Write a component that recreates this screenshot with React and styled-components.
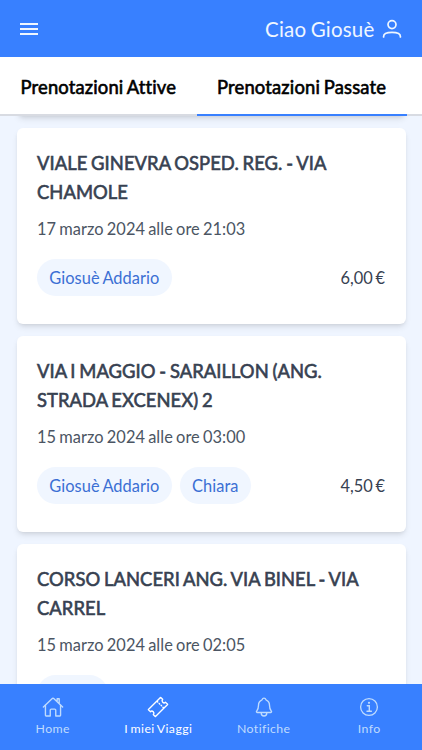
import React from 'react'
import styled, { createGlobalStyle } from 'styled-components';
import { IoHomeOutline, IoTicketOutline, IoNotificationsOutline } from 'react-icons/io5';

const trips = [
    {
        route: 'VIALE GINEVRA OSPED. REG. - VIA CHAMOLE',
        date: '17 marzo 2024 alle ore 21:03',
        people: ['Giosuè Addario'],
        price: '6,00 €'
    },
    {
        route: 'VIA I MAGGIO - SARAILLON (ANG. STRADA EXCENEX) 2',
        date: '15 marzo 2024 alle ore 03:00',
        people: ['Giosuè Addario', 'Chiara'],
        price: '4,50 €'
    },
    {
        route: 'CORSO LANCERI ANG. VIA BINEL - VIA CARREL',
        date: '15 marzo 2024 alle ore 02:05',
        people: ['Chiara']
    }
]

function Trip({ route, date, people, price }) {
    return (
        <Card>
            <Route>{route}</Route>
            <TripDate>{date}</TripDate>
            <CardFooter>
                <People>
                    {people.map((name) => <Chip key={name}>{name}</Chip>)}
                </People>
                {price && <Price>{price}</Price>}
            </CardFooter>
        </Card>
    )
}

function App() {
    return (
        <>
            <GlobalStyle />
            <Screen>
                <Header>
                    <MenuButton aria-label="Menu">
                        <span />
                        <span />
                        <span />
                    </MenuButton>
                    <User>
                        <span>Ciao Giosuè</span>
                        <PersonIcon />
                    </User>
                </Header>
                <Tabs>
                    <Tab>Prenotazioni Attive</Tab>
                    <Tab $active>Prenotazioni Passate</Tab>
                </Tabs>
                <List>
                    <CardEdge />
                    {trips.map((trip) => <Trip key={trip.route} {...trip} />)}
                </List>
                <BottomNav>
                    <NavItem><IoHomeOutline /><span>Home</span></NavItem>
                    <NavItem $active><IoTicketOutline /><span>I miei Viaggi</span></NavItem>
                    <NavItem><IoNotificationsOutline /><span>Notifiche</span></NavItem>
                    <NavItem><InfoIcon /><span>Info</span></NavItem>
                </BottomNav>
            </Screen>
        </>
    )
}

function PersonIcon() {
    return (
        <svg width="20" height="20" viewBox="0 0 20 20" fill="none" stroke="currentColor" strokeWidth="1.7" strokeLinecap="round">
            <circle cx="10" cy="5.6" r="4" />
            <path d="M1.6 18v-.6c0-2.5 3-4.1 8.4-4.1s8.4 1.6 8.4 4.1v.6" />
        </svg>
    )
}

function InfoIcon() {
    return (
        <svg viewBox="0 0 22 22" fill="none" stroke="currentColor" strokeWidth="1.3" strokeLinecap="round">
            <circle cx="11" cy="11" r="8.4" />
            <path d="M9.3 9.8H11.3V15M9 15.2H13.4" strokeWidth="1.4" />
            <circle cx="11" cy="6.8" r="1.1" fill="currentColor" stroke="none" />
        </svg>
    )
}

const GlobalStyle = createGlobalStyle`
    *{
        box-sizing: border-box;
        margin: 0;
        padding: 0;
    }
    body{
        font-family: Lato, 'Liberation Sans', sans-serif;
        background: #eff5ff;
        overflow: hidden;
    }
`;

const Screen = styled.div`
    display: flex;
    flex-direction: column;
    height: 100vh;
    overflow: hidden;
    background: #eff5ff;
    word-spacing: -1px;
`;

const Header = styled.header`
    display: flex;
    flex-shrink: 0;
    align-items: center;
    justify-content: space-between;
    height: 57px;
    padding: 0 20px;
    background: #3880ff;
    color: #eff6ff;
`;

const MenuButton = styled.button`
    display: flex;
    flex-direction: column;
    gap: 3px;
    width: 18px;
    border: 0;
    background: none;
    span{
        height: 2px;
        background: #eff6ff;
    }
`;

const User = styled.div`
    display: flex;
    align-items: center;
    gap: 7.5px;
    font-size: 20.5px;
    line-height: 28px;
    letter-spacing: 0.2px;
`;

const Tabs = styled.nav`
    display: flex;
    position: relative;
    z-index: 1;
    flex-shrink: 0;
    height: 59px;
    background: #fff;
    box-shadow: inset 0 -2px #d8dbe2;
`;

const Tab = styled.button`
    height: 59px;
    padding: 3px 20.5px 0;
    border: 0;
    border-bottom: 2px solid ${({ $active }) => $active ? '#3880ff' : 'transparent'};
    background: none;
    color: #000;
    font: 400 18.4px Lato, sans-serif;
    letter-spacing: 0.16px;
    word-spacing: -1px;
    -webkit-text-stroke: 0.6px #000;
    white-space: nowrap;
`;

const List = styled.main`
    display: flex;
    flex: 1;
    flex-direction: column;
    gap: 12px;
    min-height: 0;
    padding: 0 16.5px;
    overflow: hidden;
`;

// bottom edge of the trip scrolled under the tabs
const CardEdge = styled.div`
    flex-shrink: 0;
    height: 12px;
    margin-top: -12px;
    background: #fff;
    border-radius: 6px;
    box-shadow: 0 4px 6px -1px rgba(0, 0, 0, 0.1), 0 2px 4px -2px rgba(0, 0, 0, 0.1);
`;

const Card = styled.article`
    flex-shrink: 0;
    height: 196px;
    padding: 21px 20.5px;
    background: #fff;
    border-radius: 6px;
    box-shadow: 0 4px 6px -1px rgba(0, 0, 0, 0.1), 0 2px 4px -2px rgba(0, 0, 0, 0.1);
`;

const Route = styled.h2`
    color: #374151;
    font-size: 18.4px;
    font-weight: 400;
    line-height: 28.5px;
    letter-spacing: 0.05px;
    -webkit-text-stroke: 0.6px #374151;
`;

const TripDate = styled.p`
    margin-top: 10px;
    color: #4b5563;
    font-size: 16.4px;
    line-height: 25px;
    letter-spacing: 0.03px;
`;

const CardFooter = styled.div`
    display: flex;
    align-items: center;
    justify-content: space-between;
    margin-top: 18px;
`;

const People = styled.div`
    display: flex;
    gap: 8px;
`;

const Chip = styled.span`
    height: 37px;
    padding: 0 12.3px;
    border-radius: 18.5px;
    background: #f0f6ff;
    color: #3b6fd4;
    font-size: 16.4px;
    letter-spacing: 0.06px;
    line-height: 37px;
`;

const Price = styled.span`
    color: #374151;
    font-size: 16.4px;
    word-spacing: -1.5px;
`;

const BottomNav = styled.footer`
    display: grid;
    flex-shrink: 0;
    grid-template-columns: repeat(4, 1fr);
    height: 66px;
    background: #3880ff;
`;

const NavItem = styled.a`
    display: flex;
    flex-direction: column;
    align-items: center;
    gap: 2px;
    padding-top: 12px;
    color: ${({ $active }) => $active ? '#fff' : '#bfdbfe'};
    font-size: 12.3px;
    line-height: 17px;
    letter-spacing: 0.4px;
    svg{
        width: 22px;
        height: 22px;
    }
`;

export default App
